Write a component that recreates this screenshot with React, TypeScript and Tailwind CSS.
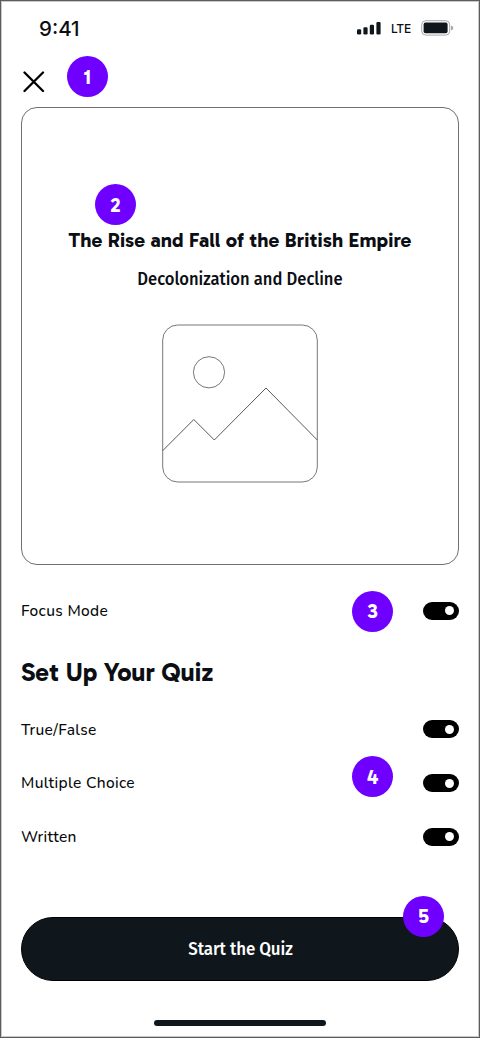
import { ReactNode } from "react";

function Badge({ n, className }: { n: number; className: string }) {
  return (
    <span
      className={`absolute z-10 flex size-[41px] items-center justify-center rounded-full bg-[#6f00ff] font-['Gabarito','Figtree','Noto_Sans',sans-serif] text-[20px] leading-none font-bold text-white ${className}`}
    >
      {n}
    </span>
  );
}

function Toggle() {
  return (
    <span className="flex h-[18px] w-9 items-center justify-end rounded-full bg-black pr-[5px]">
      <span className="size-[9px] rounded-full bg-white" />
    </span>
  );
}

function Row({ label, children }: { label: string; children?: ReactNode }) {
  return (
    <div className="relative flex h-[18px] items-center justify-between">
      <span className="font-['Nunito','Noto_Sans',sans-serif] text-[15.5px] leading-none font-medium tracking-[0.33px] whitespace-nowrap text-[#08090b]">
        {label}
      </span>
      <Toggle />
      {children}
    </div>
  );
}

export default function App() {
  return (
    <main className="flex h-[1038px] w-[480px] flex-col border border-[#5c5c5e] bg-white px-5 pt-[1px] text-[#0b0e13] shadow-[inset_0_0_0_1px_#c9c9ca]">
      <header className="flex h-[54px] items-center justify-between pr-[5px] pl-[18px]">
        <span className="font-['Inter',sans-serif] text-[20.5px] leading-none font-medium">9:41</span>
        <div className="flex items-center">
          <svg className="-mt-[2px] h-[14px] w-6" viewBox="0 0 24 14" fill="#0f161c">
            <rect x="0" y="8.2" width="4.2" height="5.2" rx="1.2" />
            <rect x="6.4" y="6.2" width="4.2" height="7.2" rx="1.2" />
            <rect x="12.8" y="3.7" width="4.2" height="9.7" rx="1.2" />
            <rect x="19.4" y="0.9" width="4.2" height="12.5" rx="1.2" />
          </svg>
          <span className="ml-[10px] w-[21px] font-['Inter',sans-serif] text-[12px] leading-none font-medium tracking-[-0.3px]">LTE</span>
          <svg className="-mt-[2px] ml-[9px] h-4 w-[33px]" viewBox="0 0 33 16">
            <rect x="0.7" y="0.7" width="28" height="14.4" rx="4" fill="none" stroke="#a6a7a9" />
            <rect x="2.6" y="2.6" width="24" height="10.6" rx="1.8" fill="#0f161c" />
            <path d="M30 5.4v5q2.3-.8 2.3-2.5T30 5.4" fill="#a6a7a9" />
          </svg>
        </div>
      </header>

      <div className="relative flex h-[51px] items-center">
        <svg className="ml-[2px] h-[22px] w-[22px]" viewBox="0 0 22 22" fill="none" stroke="black" strokeWidth="2.3" strokeLinecap="round">
          <path d="M1.5 1.5 20 20M20 1.5 1.5 20" />
        </svg>
        <Badge n={1} className="top-0 left-[46px]" />
      </div>

      <section className="relative flex h-[458px] flex-col items-center rounded-[16px] border border-[#707072]">
        <Badge n={2} className="top-[76px] left-[73px]" />
        <h1 className="mt-[118px] font-['Gabarito','Figtree','Inter',sans-serif] text-[20.2px] leading-[28px] font-bold tracking-[0.1px] whitespace-nowrap">
          The Rise and Fall of the British Empire
        </h1>
        <h2 className="mt-[13px] scale-x-[0.942] font-['Fira_Sans','Noto_Sans',sans-serif] text-[17.6px] leading-[26px] font-medium whitespace-nowrap">
          Decolonization and Decline
        </h2>
        <svg className="mt-[31px] h-[160px] w-[156px]" viewBox="0 0 156 160" fill="none" stroke="#777779" strokeWidth="1">
          <rect x="0.7" y="1" width="154.6" height="157" rx="15" />
          <circle cx="47" cy="48.3" r="15.6" />
          <path d="M.7 126.7 31.8 95.5 52.3 116 104 64l51.3 52" stroke="#59595b" />
        </svg>
      </section>

      <div className="mt-[36.5px]">
        <Row label="Focus Mode">
          <Badge n={3} className="top-[-11px] left-[331px]" />
        </Row>
      </div>

      <h2 className="mt-[37.5px] font-['Gabarito','Figtree','Inter',sans-serif] text-[25.5px] leading-[32px] font-bold tracking-[0.03px] whitespace-nowrap">Set Up Your Quiz</h2>

      <div className="mt-[31.4px] flex flex-col gap-[35.7px]">
        <Row label="True/False" />
        <Row label="Multiple Choice">
          <Badge n={4} className="top-[-18px] left-[331px]" />
        </Row>
        <Row label="Written" />
      </div>

      <button className="relative mt-[71.2px] flex h-16 shrink-0 items-center justify-center rounded-full border border-black bg-[#0f171d] text-white">
        <span className="scale-x-[0.94] font-['Fira_Sans','Noto_Sans',sans-serif] text-[18px] leading-none font-medium tracking-[-0.1px] whitespace-nowrap">Start the Quiz</span>
        <Badge n={5} className="top-[-22px] left-[381px]" />
      </button>

      <div className="mt-[39.5px] ml-[133px] h-[6px] w-[172px] shrink-0 rounded-full bg-[#0f171d]" />
    </main>
  );
}
